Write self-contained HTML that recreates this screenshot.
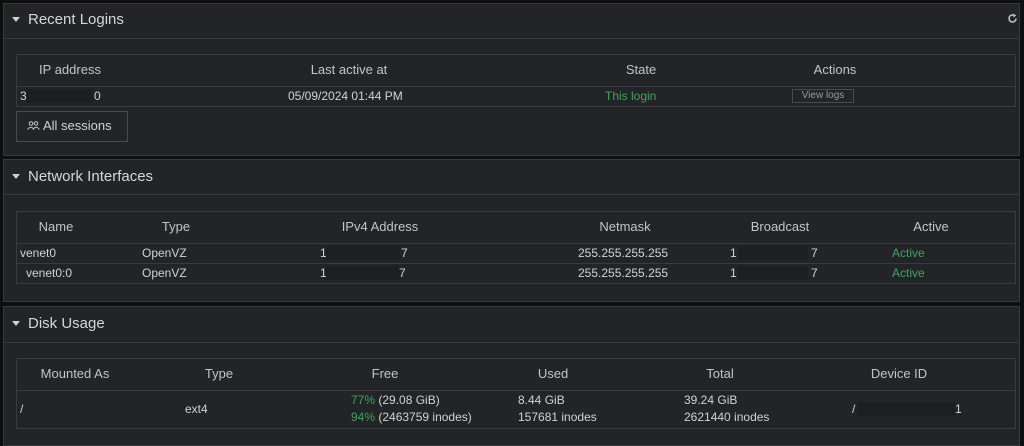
<!DOCTYPE html>
<html><head><meta charset="utf-8"><style>
body{margin:0;width:1024px;height:441px;background:#0e0e0f;overflow:hidden;font-family:"Liberation Sans",Arial,sans-serif;position:relative}
.p{position:absolute;left:3px;width:1017px;background:#232428;border:1px solid #38393d;box-sizing:border-box}
.hd{position:absolute;left:0;right:0;top:0;border-bottom:1px solid #38393d}
.ttl{position:absolute;left:28px;font-size:15px;color:#d6d6d6}
.tri{position:absolute;left:12px;width:0;height:0;border-left:4px solid transparent;border-right:4px solid transparent;border-top:5px solid #cfcfcf}
.tb{position:absolute;left:16px;width:1000px;border:1px solid #3a3b3f;box-sizing:border-box}
.ln{position:absolute;left:16px;width:1000px;height:1px;background:#3a3b3f}
.t{position:absolute;white-space:nowrap;font-size:12px;color:#d2d2d2;line-height:14px}
.h{position:absolute;white-space:nowrap;font-size:13px;color:#c4c4c4;transform:translateX(-50%);line-height:15px}
.g{color:#3fa35a}
.r{position:absolute;background:#1d1e21;height:14px}
</style></head><body>
<div class="p" style="top:3px;height:153px">
 <div class="hd" style="height:34px"></div>
</div>
<div class="tri" style="top:17px"></div>
<div class="ttl" style="top:11px">Recent Logins</div>
<svg style="position:absolute;left:1007px;top:13px" width="11" height="11" viewBox="0 0 11 11"><path d="M9 5.5A3.5 3.5 0 1 1 7.5 2.6" fill="none" stroke="#bbb" stroke-width="1.6"/><path d="M6 0.5L9.5 2.5L6.5 4.5Z" fill="#bbb"/></svg>
<div class="tb" style="top:54px;height:53px"></div>
<div class="ln" style="top:86px"></div>
<div class="h" style="left:70px;top:62px">IP address</div>
<div class="h" style="left:349px;top:62px">Last active at</div>
<div class="h" style="left:641px;top:62px">State</div>
<div class="h" style="left:835px;top:62px">Actions</div>
<div class="t" style="left:20px;top:89px">3</div><div class="r" style="left:26px;top:89px;width:67px"></div><div class="t" style="left:94px;top:89px">0</div>
<div class="t" style="left:288px;top:89px">05/09/2024 01:44 PM</div>
<div class="t g" style="left:605px;top:89px">This login</div>
<div style="position:absolute;left:792px;top:89px;width:62px;height:14px;border:1px solid #4a4b4f;box-sizing:border-box;font-size:10px;color:#9a9a9a;text-align:center;line-height:12px">View logs</div>
<div style="position:absolute;left:16px;top:111px;width:112px;height:31px;border:1px solid #4a4b4f;box-sizing:border-box"></div>
<svg style="position:absolute;left:27px;top:121px" width="13" height="9" viewBox="0 0 13 9"><circle cx="4" cy="2.5" r="1.8" fill="none" stroke="#ccc" stroke-width="1"/><circle cx="9" cy="2.5" r="1.8" fill="none" stroke="#ccc" stroke-width="1"/><path d="M0.5 8.5Q4 4 7 8.5M6 8.5Q9 4 12.5 8.5" fill="none" stroke="#ccc" stroke-width="1"/></svg>
<div class="t" style="left:43px;top:119px;font-size:13px">All sessions</div>

<div class="p" style="top:159px;height:143px">
 <div class="hd" style="height:34px"></div>
</div>
<div class="tri" style="top:174px"></div>
<div class="ttl" style="top:168px">Network Interfaces</div>
<div class="tb" style="top:211px;height:73px"></div>
<div class="ln" style="top:243px"></div>
<div class="ln" style="top:263px"></div>
<div class="h" style="left:56px;top:219px">Name</div>
<div class="h" style="left:176px;top:219px">Type</div>
<div class="h" style="left:380px;top:219px">IPv4 Address</div>
<div class="h" style="left:625px;top:219px">Netmask</div>
<div class="h" style="left:780px;top:219px">Broadcast</div>
<div class="h" style="left:931px;top:219px">Active</div>
<div class="t" style="left:20px;top:246px">venet0</div>
<div class="t" style="left:26px;top:266px">venet0:0</div>
<div class="t" style="left:142px;top:246px">OpenVZ</div>
<div class="t" style="left:142px;top:266px">OpenVZ</div>
<div class="t" style="left:320px;top:246px">1</div><div class="r" style="left:326px;top:246px;width:74px"></div><div class="t" style="left:401px;top:246px">7</div>
<div class="t" style="left:320px;top:266px">1</div><div class="r" style="left:326px;top:266px;width:74px"></div><div class="t" style="left:399px;top:266px">7</div>
<div class="t" style="left:578px;top:246px">255.255.255.255</div>
<div class="t" style="left:578px;top:266px">255.255.255.255</div>
<div class="t" style="left:730px;top:246px">1</div><div class="r" style="left:738px;top:246px;width:70px"></div><div class="t" style="left:811px;top:246px">7</div>
<div class="t" style="left:730px;top:266px">1</div><div class="r" style="left:738px;top:266px;width:70px"></div><div class="t" style="left:811px;top:266px">7</div>
<div class="t g" style="left:892px;top:246px">Active</div>
<div class="t g" style="left:892px;top:266px">Active</div>

<div class="p" style="top:306px;height:140px">
 <div class="hd" style="height:35px"></div>
</div>
<div class="tri" style="top:321px"></div>
<div class="ttl" style="top:315px">Disk Usage</div>
<div class="tb" style="top:358px;height:71px"></div>
<div class="ln" style="top:390px"></div>
<div class="h" style="left:75px;top:366px">Mounted As</div>
<div class="h" style="left:219px;top:366px">Type</div>
<div class="h" style="left:385px;top:366px">Free</div>
<div class="h" style="left:553px;top:366px">Used</div>
<div class="h" style="left:720px;top:366px">Total</div>
<div class="h" style="left:899px;top:366px">Device ID</div>
<div class="t" style="left:20px;top:402px">/</div>
<div class="t" style="left:185px;top:402px">ext4</div>
<div class="t" style="left:351px;top:393px"><span class="g">77%</span> (29.08 GiB)</div>
<div class="t" style="left:351px;top:410px"><span class="g">94%</span> (2463759 inodes)</div>
<div class="t" style="left:518px;top:393px">8.44 GiB</div>
<div class="t" style="left:518px;top:410px">157681 inodes</div>
<div class="t" style="left:684px;top:393px">39.24 GiB</div>
<div class="t" style="left:684px;top:410px">2621440 inodes</div>
<div class="t" style="left:852px;top:402px">/</div><div class="r" style="left:857px;top:402px;width:98px"></div><div class="t" style="left:955px;top:402px">1</div>
</body></html>
